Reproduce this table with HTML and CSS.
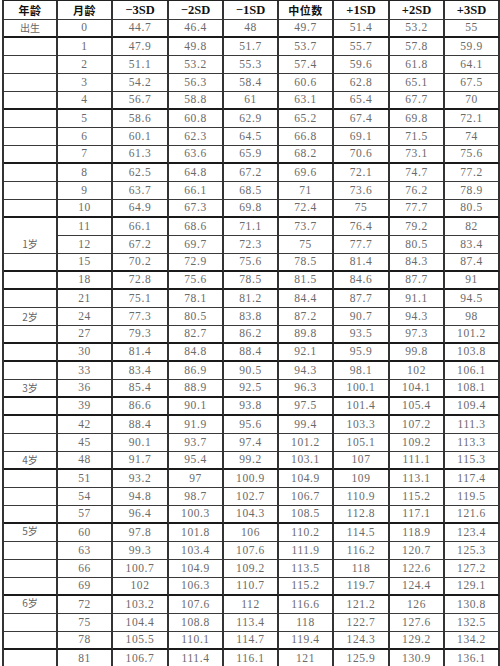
FILE: index.html
```html
<!DOCTYPE html>
<html lang="zh">
<head>
<meta charset="utf-8">
<title>儿童身高标准差数值表</title>
<link rel="stylesheet" href="styles.css">
</head>
<body>
<table class="grid">
<colgroup>
<col class="c54"><col class="c55"><col class="c56"><col class="c55"><col class="c55"><col class="c55"><col class="c56"><col class="c55"><col class="c55">
</colgroup>
<thead>
<tr class="head"><th class="cjk">年龄</th><th class="cjk">月龄</th><th>−3SD</th><th>−2SD</th><th>−1SD</th><th class="cjk">中位数</th><th>+1SD</th><th>+2SD</th><th>+3SD</th></tr>
</thead>
<tbody>
<tr class="thick"><td class="age">出生</td><td>0</td><td>44.7</td><td>46.4</td><td>48</td><td>49.7</td><td>51.4</td><td>53.2</td><td>55</td></tr>
<tr><td class="age"></td><td>1</td><td>47.9</td><td>49.8</td><td>51.7</td><td>53.7</td><td>55.7</td><td>57.8</td><td>59.9</td></tr>
<tr><td class="age"></td><td>2</td><td>51.1</td><td>53.2</td><td>55.3</td><td>57.4</td><td>59.6</td><td>61.8</td><td>64.1</td></tr>
<tr><td class="age"></td><td>3</td><td>54.2</td><td>56.3</td><td>58.4</td><td>60.6</td><td>62.8</td><td>65.1</td><td>67.5</td></tr>
<tr class="thick"><td class="age"></td><td>4</td><td>56.7</td><td>58.8</td><td>61</td><td>63.1</td><td>65.4</td><td>67.7</td><td>70</td></tr>
<tr><td class="age"></td><td>5</td><td>58.6</td><td>60.8</td><td>62.9</td><td>65.2</td><td>67.4</td><td>69.8</td><td>72.1</td></tr>
<tr><td class="age"></td><td>6</td><td>60.1</td><td>62.3</td><td>64.5</td><td>66.8</td><td>69.1</td><td>71.5</td><td>74</td></tr>
<tr class="thick"><td class="age"></td><td>7</td><td>61.3</td><td>63.6</td><td>65.9</td><td>68.2</td><td>70.6</td><td>73.1</td><td>75.6</td></tr>
<tr><td class="age"></td><td>8</td><td>62.5</td><td>64.8</td><td>67.2</td><td>69.6</td><td>72.1</td><td>74.7</td><td>77.2</td></tr>
<tr><td class="age"></td><td>9</td><td>63.7</td><td>66.1</td><td>68.5</td><td>71</td><td>73.6</td><td>76.2</td><td>78.9</td></tr>
<tr class="thick"><td class="age"></td><td>10</td><td>64.9</td><td>67.3</td><td>69.8</td><td>72.4</td><td>75</td><td>77.7</td><td>80.5</td></tr>
<tr><td class="age merged" rowspan="2">1岁</td><td>11</td><td>66.1</td><td>68.6</td><td>71.1</td><td>73.7</td><td>76.4</td><td>79.2</td><td>82</td></tr>
<tr><td>12</td><td>67.2</td><td>69.7</td><td>72.3</td><td>75</td><td>77.7</td><td>80.5</td><td>83.4</td></tr>
<tr class="thick"><td class="age"></td><td>15</td><td>70.2</td><td>72.9</td><td>75.6</td><td>78.5</td><td>81.4</td><td>84.3</td><td>87.4</td></tr>
<tr class="thick"><td class="age"></td><td>18</td><td>72.8</td><td>75.6</td><td>78.5</td><td>81.5</td><td>84.6</td><td>87.7</td><td>91</td></tr>
<tr><td class="age"></td><td>21</td><td>75.1</td><td>78.1</td><td>81.2</td><td>84.4</td><td>87.7</td><td>91.1</td><td>94.5</td></tr>
<tr><td class="age">2岁</td><td>24</td><td>77.3</td><td>80.5</td><td>83.8</td><td>87.2</td><td>90.7</td><td>94.3</td><td>98</td></tr>
<tr class="thick"><td class="age"></td><td>27</td><td>79.3</td><td>82.7</td><td>86.2</td><td>89.8</td><td>93.5</td><td>97.3</td><td>101.2</td></tr>
<tr class="thick"><td class="age"></td><td>30</td><td>81.4</td><td>84.8</td><td>88.4</td><td>92.1</td><td>95.9</td><td>99.8</td><td>103.8</td></tr>
<tr><td class="age"></td><td>33</td><td>83.4</td><td>86.9</td><td>90.5</td><td>94.3</td><td>98.1</td><td>102</td><td>106.1</td></tr>
<tr class="thick"><td class="age">3岁</td><td>36</td><td>85.4</td><td>88.9</td><td>92.5</td><td>96.3</td><td>100.1</td><td>104.1</td><td>108.1</td></tr>
<tr class="thick"><td class="age"></td><td>39</td><td>86.6</td><td>90.1</td><td>93.8</td><td>97.5</td><td>101.4</td><td>105.4</td><td>109.4</td></tr>
<tr><td class="age"></td><td>42</td><td>88.4</td><td>91.9</td><td>95.6</td><td>99.4</td><td>103.3</td><td>107.2</td><td>111.3</td></tr>
<tr><td class="age"></td><td>45</td><td>90.1</td><td>93.7</td><td>97.4</td><td>101.2</td><td>105.1</td><td>109.2</td><td>113.3</td></tr>
<tr class="thick"><td class="age">4岁</td><td>48</td><td>91.7</td><td>95.4</td><td>99.2</td><td>103.1</td><td>107</td><td>111.1</td><td>115.3</td></tr>
<tr><td class="age"></td><td>51</td><td>93.2</td><td>97</td><td>100.9</td><td>104.9</td><td>109</td><td>113.1</td><td>117.4</td></tr>
<tr><td class="age"></td><td>54</td><td>94.8</td><td>98.7</td><td>102.7</td><td>106.7</td><td>110.9</td><td>115.2</td><td>119.5</td></tr>
<tr class="thick"><td class="age"></td><td>57</td><td>96.4</td><td>100.3</td><td>104.3</td><td>108.5</td><td>112.8</td><td>117.1</td><td>121.6</td></tr>
<tr><td class="age top">5岁</td><td>60</td><td>97.8</td><td>101.8</td><td>106</td><td>110.2</td><td>114.5</td><td>118.9</td><td>123.4</td></tr>
<tr><td class="age"></td><td>63</td><td>99.3</td><td>103.4</td><td>107.6</td><td>111.9</td><td>116.2</td><td>120.7</td><td>125.3</td></tr>
<tr><td class="age"></td><td>66</td><td>100.7</td><td>104.9</td><td>109.2</td><td>113.5</td><td>118</td><td>122.6</td><td>127.2</td></tr>
<tr class="thick"><td class="age"></td><td>69</td><td>102</td><td>106.3</td><td>110.7</td><td>115.2</td><td>119.7</td><td>124.4</td><td>129.1</td></tr>
<tr><td class="age top">6岁</td><td>72</td><td>103.2</td><td>107.6</td><td>112</td><td>116.6</td><td>121.2</td><td>126</td><td>130.8</td></tr>
<tr><td class="age"></td><td>75</td><td>104.4</td><td>108.8</td><td>113.4</td><td>118</td><td>122.7</td><td>127.6</td><td>132.5</td></tr>
<tr class="thick"><td class="age"></td><td>78</td><td>105.5</td><td>110.1</td><td>114.7</td><td>119.4</td><td>124.3</td><td>129.2</td><td>134.2</td></tr>
<tr><td class="age"></td><td>81</td><td>106.7</td><td>111.4</td><td>116.1</td><td>121</td><td>125.9</td><td>130.9</td><td>136.1</td></tr>
</tbody>
</table>
</body>
</html>
```
FILE: styles.css
```css
html, body {
  margin: 0;
  padding: 0;
  background: #ffffff;
}

.grid {
  margin-left: 2px;
  border-collapse: separate;
  border-spacing: 0;
  table-layout: fixed;
  width: 497px;
  border-top: 1px solid #222;
  border-left: 2px solid #333;
}

.c54 { width: 54px; }
.c55 { width: 55px; }
.c56 { width: 56px; }

.grid th,
.grid td {
  padding: 0;
  text-align: center;
  vertical-align: middle;
  border-right: 2px solid #333;
  border-bottom: 1px solid #3a3a3a;
  white-space: nowrap;
  line-height: 1;
}

.grid td {
  font-family: "Liberation Serif", serif;
  font-size: 11.5px;
  letter-spacing: 0.6px;
  color: #6a6a6a;
}

.grid tr { height: 18px; }
.grid tr.head { height: 19px; }

.grid th {
  font-family: "Liberation Serif", serif;
  font-weight: bold;
  color: #111;
  font-size: 12.5px;
  letter-spacing: 0;
}

.grid th.cjk {
  font-family: "Noto Sans CJK SC", sans-serif;
  font-size: 11px;
  letter-spacing: 0.5px;
}

.grid tr.thick td {
  border-bottom: 2px solid #1a1a1a;
}

.grid td.age {
  font-family: "Noto Sans CJK SC", sans-serif;
  font-size: 10px;
  letter-spacing: 0;
  color: #666;
}

.grid td.merged {
  vertical-align: bottom;
  padding-bottom: 4px;
}

.grid td.top {
  vertical-align: top;
  padding-top: 2px;
}
```
